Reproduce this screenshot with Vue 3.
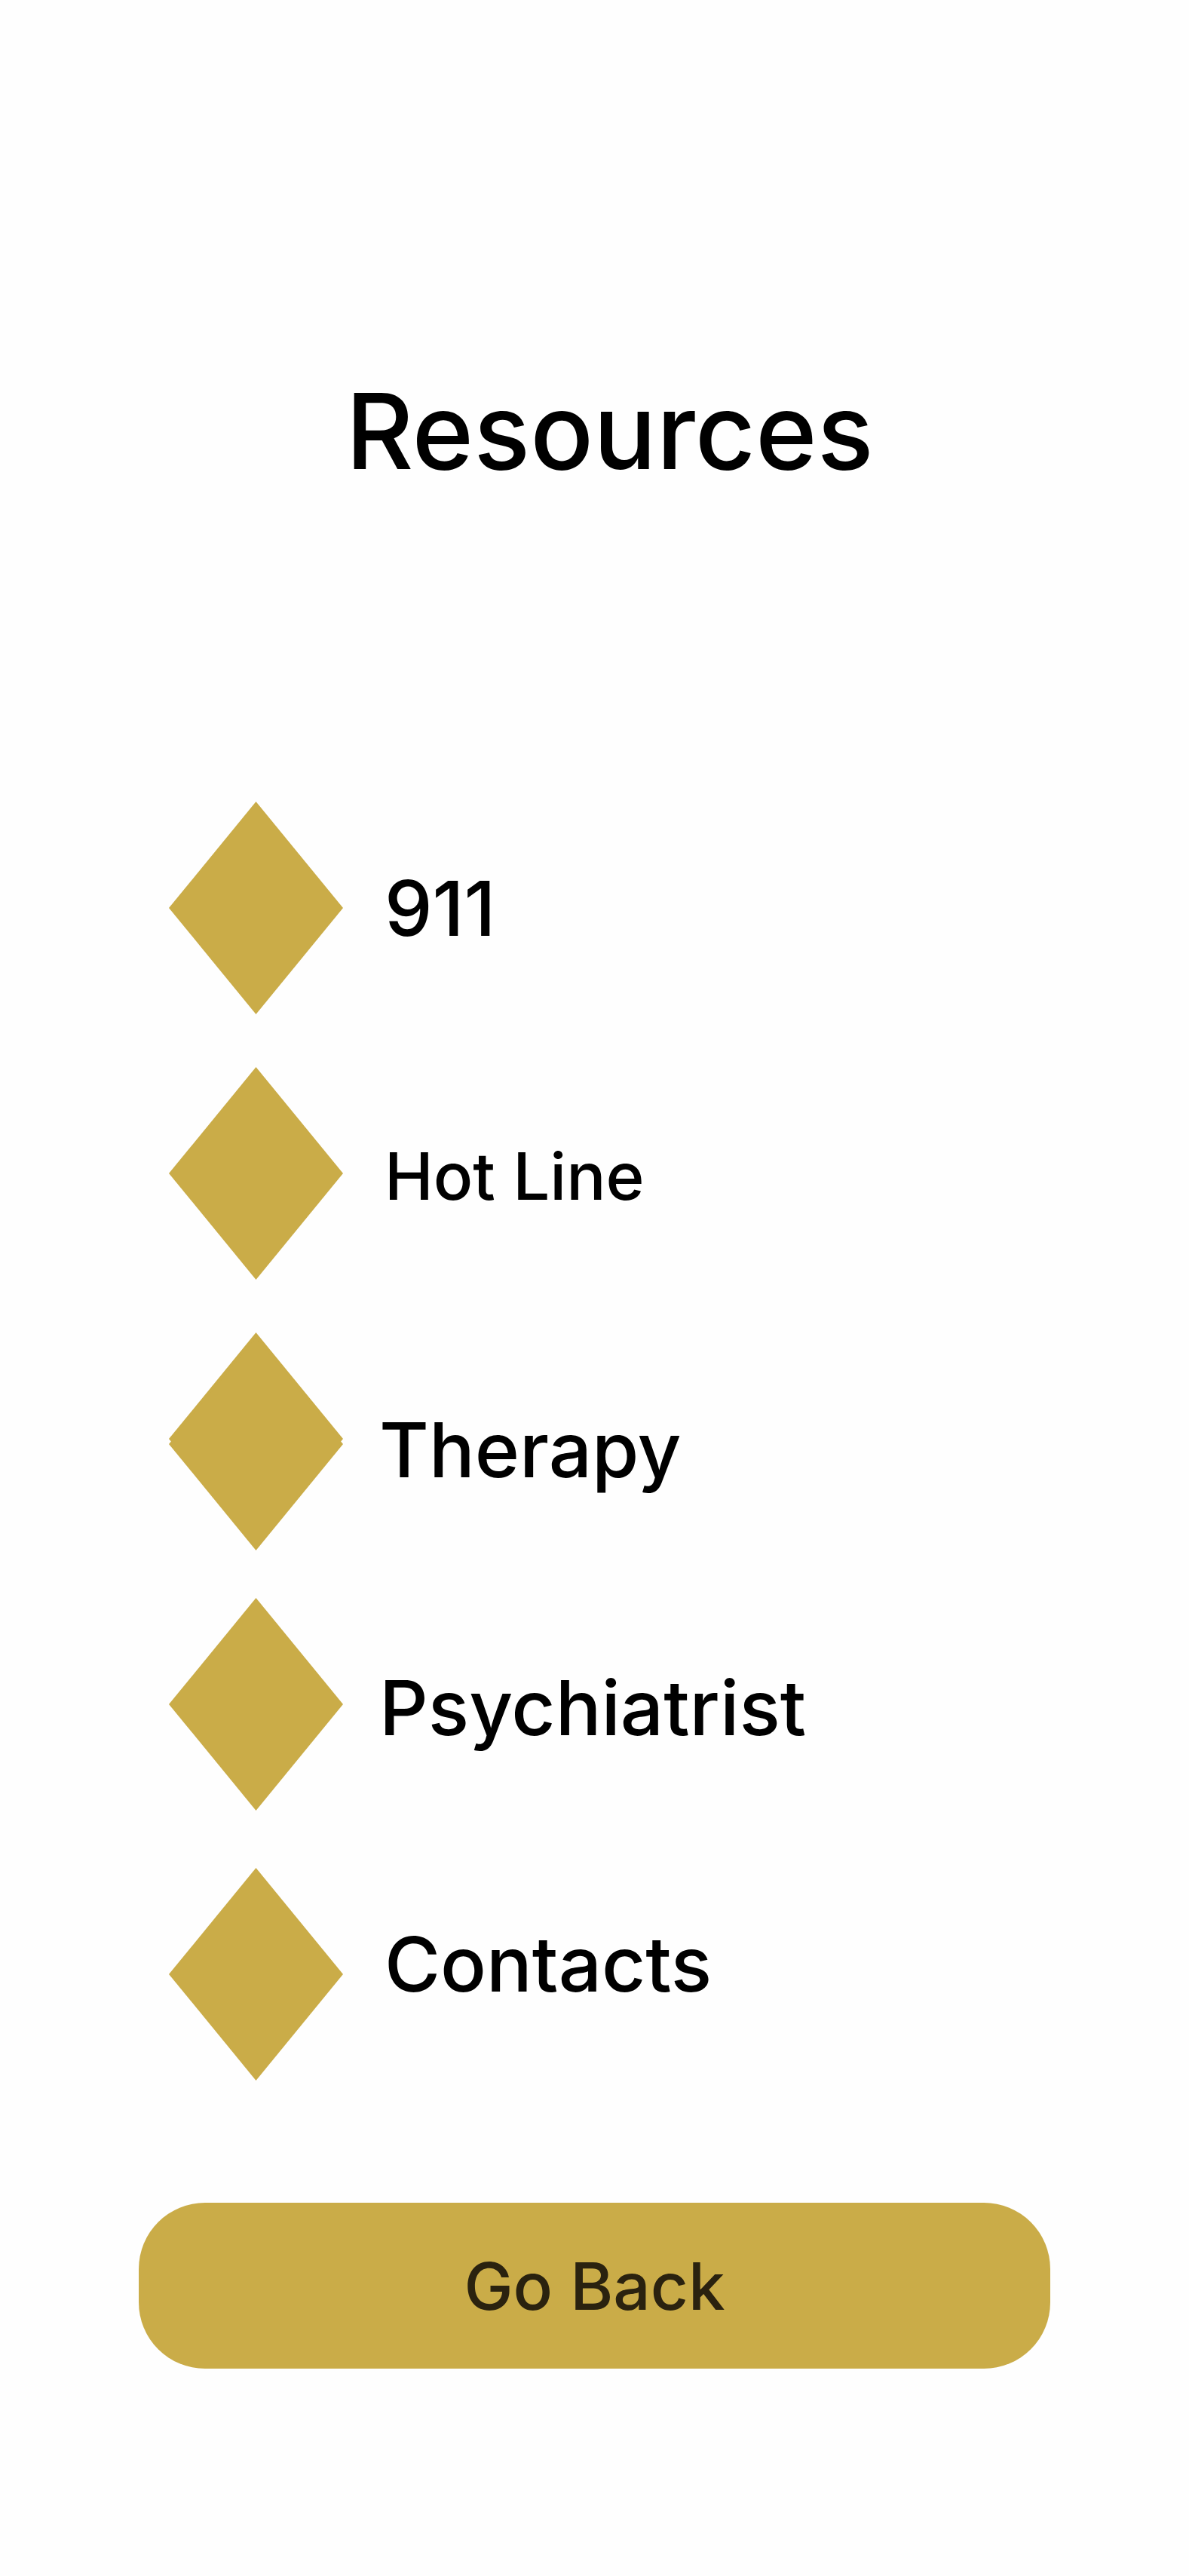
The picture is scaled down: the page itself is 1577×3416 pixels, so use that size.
<script setup>
const resources = [
  { label: '911', href: 'tel:911' },
  { label: 'Hot Line', href: '#hot-line', mods: ['compact', 'lowered'] },
  { label: 'Therapy', href: '#therapy', mods: ['outdent', 'dropped'], stacked: true },
  { label: 'Psychiatrist', href: '#psychiatrist', mods: ['outdent', 'lowered'] },
  { label: 'Contacts', href: '#contacts', mods: ['raised'] },
]
</script>

<template>
  <main class="screen">
    <h1 class="title">Resources</h1>

    <ul class="list">
      <li v-for="item in resources" :key="item.label" class="item">
        <a class="link" :href="item.href">
          <svg class="marker" viewBox="0 0 231 282" aria-hidden="true">
            <path d="M115.500 0 231 141 115.500 282 0 141Z" />
            <path v-if="item.stacked" d="M115.500 7 231 148 115.500 289 0 148Z" />
          </svg>
          <span class="label" :class="item.mods">{{ item.label }}</span>
        </a>
      </li>
    </ul>

    <button class="back" type="button">Go Back</button>
  </main>
</template>

<style>
body {
  margin: 0;
  background: #fefefe;
}
</style>

<style scoped>
.screen {
  box-sizing: border-box;
  display: flex;
  flex-direction: column;
  min-height: 100vh;
  padding: 484px 184px 275px;
  font-family: Inter, "Liberation Sans", sans-serif;
  font-weight: 500;
  color: #000;
}

.title {
  margin: 0;
  padding-left: 40px;
  font-size: 139px;
  font-weight: 500;
  line-height: 176px;
  text-align: center;
}

.list {
  display: flex;
  flex-direction: column;
  gap: 70px;
  margin: 403px 0 0;
  padding: 0 0 0 40px;
  list-style: none;
}

.item:last-child {
  padding-top: 6px;
}

.link {
  display: flex;
  align-items: center;
  color: inherit;
  text-decoration: none;
}

.marker {
  flex: none;
  width: 231px;
  height: 282px;
  overflow: visible;
  fill: #caac48;
}

.label {
  margin-left: 55px;
  font-size: 101px;
  line-height: 124px;
}

.compact {
  font-size: 87px;
}

.outdent {
  margin-left: 48px;
}

.lowered {
  padding-top: 8px;
}

.dropped {
  padding-top: 28px;
}

.raised {
  padding-bottom: 28px;
}

.back {
  height: 220px;
  margin: 162px 0 0;
  padding: 0;
  border: 0;
  border-radius: 88px;
  background: #caac48;
  color: #2a220f;
  font: inherit;
  font-size: 87px;
  cursor: pointer;
}
</style>
